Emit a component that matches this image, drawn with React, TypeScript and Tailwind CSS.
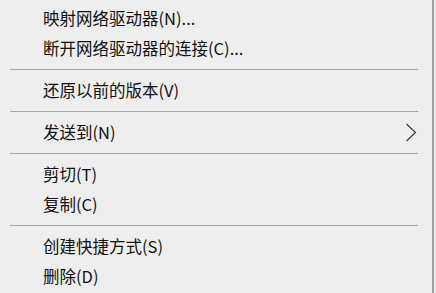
import React from 'react';

type Entry = { label: string; sub?: boolean } | 'sep';

const entries: Entry[] = [
  { label: '映射网络驱动器(N)...' },
  { label: '断开网络驱动器的连接(C)...' },
  'sep',
  { label: '还原以前的版本(V)' },
  'sep',
  { label: '发送到(N)', sub: true },
  'sep',
  { label: '剪切(T)' },
  { label: '复制(C)' },
  'sep',
  { label: '创建快捷方式(S)' },
  { label: '删除(D)' },
];

function Chevron() {
  return (
    <svg width="12" height="19" viewBox="0 0 12 19" fill="none" aria-hidden="true">
      <path d="M1.5 1 L10.5 9.5 L1.5 18" stroke="#3a3a3a" strokeWidth="1.2" />
    </svg>
  );
}

export default function App() {
  return (
    <div className="h-[293px] w-[436px] overflow-hidden bg-[#eeeeee]">
      <div
        className="h-[293px] w-[434px] border-r-2 border-[#a0a0a0] bg-[#eeeeee] pt-[3px] text-[16.5px] text-[#111111]"
        style={{ fontFamily: '"Noto Sans CJK SC", "Noto Sans", sans-serif' }}
      >
        {entries.map((e, i) =>
          e === 'sep' ? (
            <div key={i} className="flex h-[12px] items-center pl-[10px] pr-[14px]">
              <div className="h-px w-full bg-[#a6a6a6]" />
            </div>
          ) : (
            <div key={i} className="flex h-[30px] items-center justify-between pl-[43px] pr-[15px]">
              <span className="leading-none">{e.label}</span>
              {e.sub ? <Chevron /> : null}
            </div>
          ),
        )}
      </div>
    </div>
  );
}
